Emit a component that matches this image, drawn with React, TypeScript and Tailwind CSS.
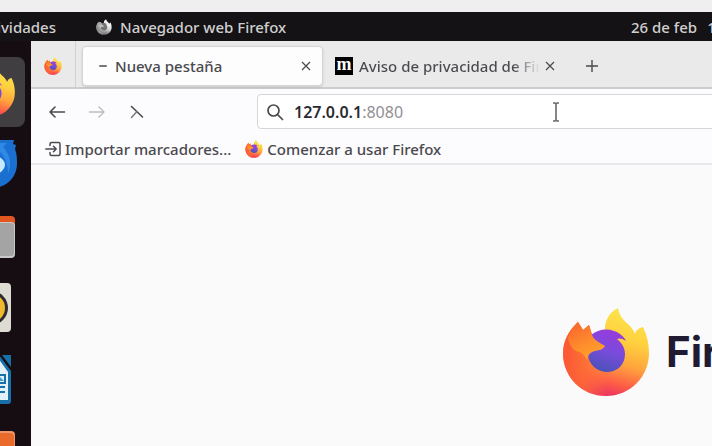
import { useId } from "react";
import type { ReactNode } from "react";

function FirefoxLogo({ className, mono = false }: { className: string; mono?: boolean }) {
  const id = useId();
  return (
    <svg viewBox="0 0 88 90" className={`${className} shrink-0 ${mono ? "grayscale brightness-125" : ""}`} aria-hidden="true">
      <defs>
        <linearGradient id={`${id}b`} x1="0.72" y1="0" x2="0.45" y2="1">
          <stop offset="0" stopColor="#fbe64a" />
          <stop offset="0.35" stopColor="#ffcf3f" />
          <stop offset="0.6" stopColor="#ffa63c" />
          <stop offset="0.82" stopColor="#ff6046" />
          <stop offset="1" stopColor="#ea2c62" />
        </linearGradient>
        <linearGradient id={`${id}f`} x1="0.1" y1="0.5" x2="1" y2="0.6">
          <stop offset="0" stopColor="#fb5a35" />
          <stop offset="0.4" stopColor="#fd6a33" stopOpacity="0.85" />
          <stop offset="1" stopColor="#ff7a3a" stopOpacity="0" />
        </linearGradient>
        <linearGradient id={`${id}s`} x1="0.2" y1="0" x2="0.7" y2="1">
          <stop offset="0" stopColor="#f9672f" />
          <stop offset="0.6" stopColor="#ff8f2c" />
          <stop offset="1" stopColor="#ffa42c" />
        </linearGradient>
        <linearGradient id={`${id}p`} x1="0.7" y1="0" x2="0.4" y2="1">
          <stop offset="0" stopColor="#9a3bdc" />
          <stop offset="0.5" stopColor="#7a4bdc" />
          <stop offset="1" stopColor="#4b52b8" />
        </linearGradient>
      </defs>
      <path
        fill={`url(#${id}b)`}
        d="M43 27C42 15 46 6 56 1c1 7 5 12 10 16 4 4 6 7 7 10 1-4 4-6 8-7 4 8 6 17 6 26 0 24-19 43-43 43S1 70 1 46c0-11 5-22 15-31l5 8 6-5 3 9z"
      />
      <path fill={`url(#${id}f)`} d="M1 46c0-11 5-22 15-31l5 8 6-5 3 9 18 18v44h-4C20 89 1 70 1 46z" />
      <path
        fill={`url(#${id}p)`}
        d="M29 28c6-5 15-7 23-4 6 2 10 6 12 10-4-3-7-3-9-2 5 4 8 9 8 15 0 11-8 18-18 18s-19-8-19-18c0-7 2-13 3-19z"
      />
      <path
        fill={`url(#${id}s)`}
        d="M6 31c2-6 5-11 10-16l5 8 6-5 3 10c2 5 8 8 13 11-2 4-6 4-10 5-5 1-7 4-8 9-3-6-6-8-11-9-4-2-7-7-8-13z"
      />
    </svg>
  );
}

function ThunderbirdIcon() {
  return (
    <svg viewBox="0 0 52 52" className="size-[52px]" aria-hidden="true">
      <path fill="#1a6fd0" d="M26 2h23l-1 4 3 1-1 4c2 5 2 10 2 16-1 14-12 23-25 23S1 40 1 26 12 2 26 2z" />
      <path fill="#2f8ae6" d="M30 5h12l-4 4c7 7 9 17 5 27 0-12-4-20-13-26z" />
      <ellipse cx="29" cy="27" rx="11" ry="9" fill="#c5e8fd" />
    </svg>
  );
}

function FilesIcon() {
  return (
    <svg viewBox="0 0 52 52" className="size-[52px]" aria-hidden="true">
      <rect x="2" y="6" width="48" height="24" rx="4" fill="#e2571f" />
      <rect x="2" y="12" width="48" height="36" rx="4" fill="#c9c8c8" />
      <rect x="3" y="13" width="46" height="33" rx="3" fill="#a5a4a5" />
    </svg>
  );
}

function RhythmboxIcon() {
  return (
    <svg viewBox="0 0 52 52" className="size-[52px]" aria-hidden="true">
      <rect x="6" y="1" width="40" height="49" rx="4" fill="#dedbd3" />
      <circle cx="26" cy="26" r="17" fill="#2d2b2c" />
      <circle cx="26" cy="26" r="14" fill="#f0b82d" />
      <circle cx="26" cy="26" r="5" fill="#2d2b2c" />
    </svg>
  );
}

function WriterIcon() {
  return (
    <svg viewBox="0 0 52 52" className="size-[52px]" aria-hidden="true">
      <path fill="#1770a8" d="M6 1h40v46a3 3 0 0 1-3 3H9a3 3 0 0 1-3-3z" />
      <path fill="#160d12" d="M34 1h3l9 12v4z" />
      <path fill="#e2f1f8" d="M9 4h24l10 14v28H9z" />
      <path stroke="#1770a8" strokeWidth="2" fill="none" d="M12 33h28M12 38h28M30 21h10v8H30z" />
      <path fill="#3c9bd0" d="M32 27l3-4 4 4z" />
    </svg>
  );
}

function SoftwareIcon() {
  return (
    <svg viewBox="0 0 52 52" className="size-[52px]" aria-hidden="true">
      <rect x="2" y="5" width="48" height="46" rx="4" fill="#f0946a" />
      <rect x="2" y="7" width="47" height="44" rx="4" fill="#ea6a2c" />
    </svg>
  );
}

function DockButton({ label, active = false, children }: { label: string; active?: boolean; children: ReactNode }) {
  return (
    <button
      type="button"
      aria-label={label}
      className={`flex h-[70px] w-[68px] shrink-0 items-center justify-center rounded-lg ${active ? "bg-[#413e41]" : ""}`}
    >
      {children}
    </button>
  );
}

function CloseIcon() {
  return (
    <svg viewBox="0 0 10 10" className="size-[10px]" fill="none" stroke="#4a4a4e" strokeWidth="1.2" aria-hidden="true">
      <path d="M1 1l8 8M9 1L1 9" />
    </svg>
  );
}

function TopBar() {
  return (
    <header className="flex h-[29px] shrink-0 items-center overflow-hidden bg-[#141214] whitespace-nowrap text-[#d0cfd0]">
      <button type="button" className="flex w-14 shrink-0 justify-end">Actividades</button>
      <button type="button" className="ml-10 flex items-center gap-2">
        <FirefoxLogo mono className="size-4" />
        Navegador web Firefox
      </button>
      <button type="button" className="ml-auto flex w-[81px] shrink-0 gap-2.5 overflow-hidden">
        <span>26 de feb</span>
        <span>1</span>
      </button>
    </header>
  );
}

function TabStrip() {
  return (
    <div role="tablist" className="flex h-12 shrink-0 items-center border-b-2 border-[#cdcccd] bg-[#ebeaeb]">
      <button type="button" role="tab" aria-label="Firefox" className="flex h-full w-[45px] items-center justify-center border-r border-[#d2d1d2] pt-1">
        <FirefoxLogo className="size-[18px]" />
      </button>
      <div className="mt-1 ml-1.5 flex h-10 w-[241px] shrink-0 items-center rounded border border-[#d4d3d5] bg-[#fdfdfe] pr-1.5 shadow-sm">
        <span className="ml-4 h-[2px] w-2 rounded bg-[#77767a]" />
        <button type="button" role="tab" aria-selected="true" className="ml-2 flex-1 text-left">Nueva pestaña</button>
        <button type="button" aria-label="Cerrar Nueva pestaña" className="flex size-5 items-center justify-center">
          <CloseIcon />
        </button>
      </div>
      <div className="mt-1 ml-3 flex h-10 w-[225px] shrink-0 items-center">
        <span className="flex size-[18px] shrink-0 items-center justify-center bg-black pb-1 font-['Liberation_Serif',serif] text-lg leading-none font-bold text-white" aria-hidden="true">m</span>
        <button type="button" role="tab" aria-selected="false" className="ml-1.5 flex-1 overflow-hidden bg-linear-to-r from-[#4a494d] from-85% to-transparent bg-clip-text text-left whitespace-nowrap text-transparent">
          Aviso de privacidad de Firefox
        </button>
        <button type="button" aria-label="Cerrar Aviso de privacidad" className="flex size-5 shrink-0 items-center justify-center">
          <CloseIcon />
        </button>
      </div>
      <button type="button" aria-label="Nueva pestaña" className="mt-1 ml-5 flex size-6 items-center justify-center">
        <svg viewBox="0 0 14 14" className="size-3.5" fill="none" stroke="#4a4a4e" strokeWidth="1.4" aria-hidden="true">
          <path d="M7 1v12M1 7h12" />
        </svg>
      </button>
    </div>
  );
}

function Toolbar() {
  return (
    <div className="flex h-[45px] shrink-0 items-center">
      <div className="flex w-[226px] shrink-0 gap-4 pl-3.5">
        <button type="button" aria-label="Atrás" className="flex size-6 items-center justify-center">
          <svg viewBox="0 0 18 14" className="h-3.5 w-[18px]" fill="none" stroke="#4b4a4e" strokeWidth="1.6" strokeLinecap="round" strokeLinejoin="round" aria-hidden="true">
            <path d="M16.500 7H2M7 2L2 7l5 5" />
          </svg>
        </button>
        <button type="button" aria-label="Adelante" disabled className="flex size-6 items-center justify-center">
          <svg viewBox="0 0 18 14" className="h-3.5 w-[18px]" fill="none" stroke="#bdbcbf" strokeWidth="1.4" strokeLinecap="round" strokeLinejoin="round" aria-hidden="true">
            <path d="M1.500 7H16M11 2l5 5-5 5" />
          </svg>
        </button>
        <button type="button" aria-label="Detener" className="flex size-6 items-center justify-center">
          <svg viewBox="0 0 14 14" className="size-3.5" fill="none" strokeLinecap="round" aria-hidden="true">
            <path stroke="#4b4a4e" strokeWidth="1.6" d="M1.500 1.500L12.500 12" />
            <path stroke="#77767a" strokeWidth="1.4" d="M7 6.500L1.500 12.500" />
          </svg>
        </button>
      </div>
      <label className="relative -mr-2 flex h-[35px] flex-1 items-center rounded border border-[#d6d5d8] bg-white pl-2 text-base">
        <svg viewBox="0 0 18 18" className="size-[18px]" fill="none" stroke="#4b4a4e" strokeWidth="1.7" strokeLinecap="round" aria-hidden="true">
          <circle cx="7.500" cy="7.500" r="5.500" />
          <path d="M11.500 11.500L16.500 16.500" />
        </svg>
        <input aria-label="Dirección" defaultValue="127.0.0.1" className="ml-2.5 field-sizing-content font-semibold text-[#2b2a30] outline-none" />
        <span className="font-normal text-[#919094]">:8080</span>
        <svg viewBox="0 0 10 20" className="absolute left-[293px] h-5 w-2.5" fill="none" stroke="#6a696b" strokeWidth="1.6" aria-hidden="true">
          <path d="M2 1h2l1 1 1-1h2M5 2v16M2 19h2l1-1 1 1h2" />
        </svg>
      </label>
    </div>
  );
}

function Bookmarks() {
  return (
    <nav className="flex h-[31px] shrink-0 items-center gap-3.5 border-b-2 border-[#e9e8ea] pl-3.5 whitespace-nowrap">
      <button type="button" className="flex items-center gap-1">
        <svg viewBox="0 0 16 16" className="size-4" fill="none" stroke="#4b4a4e" strokeWidth="1.5" strokeLinecap="round" strokeLinejoin="round" aria-hidden="true">
          <path d="M5 4.500V3a1.500 1.500 0 0 1 1.500-1.500h7A1.500 1.500 0 0 1 15 3v10a1.500 1.500 0 0 1-1.500 1.500h-7A1.500 1.500 0 0 1 5 13v-1.500M.800 8H11M8.500 5.200L11.200 8l-2.700 2.800" />
        </svg>
        Importar marcadores...
      </button>
      <a href="#inicio" className="flex items-center gap-1">
        <FirefoxLogo className="size-[18px]" />
        Comenzar a usar Firefox
      </a>
    </nav>
  );
}

export default function App() {
  return (
    <div className="flex h-screen flex-col overflow-hidden bg-[#f0eff0] pt-3 font-['Noto_Sans',sans-serif] text-[15px] leading-5 font-medium text-[#4a494d]">
      <TopBar />
      <div className="flex min-h-0 flex-1">
        <nav aria-label="Aplicaciones" className="flex w-[31px] shrink-0 flex-col items-end gap-0.5 overflow-hidden bg-[#160d12] pt-4 pr-1.5">
          <DockButton label="Firefox" active>
            <FirefoxLogo className="size-[50px]" />
          </DockButton>
          <DockButton label="Thunderbird"><ThunderbirdIcon /></DockButton>
          <DockButton label="Archivos"><FilesIcon /></DockButton>
          <DockButton label="Rhythmbox"><RhythmboxIcon /></DockButton>
          <DockButton label="LibreOffice Writer"><WriterIcon /></DockButton>
          <DockButton label="Software"><SoftwareIcon /></DockButton>
        </nav>
        <div className="flex min-w-0 flex-1 flex-col overflow-hidden bg-[#fcfbfd]">
          <TabStrip />
          <Toolbar />
          <Bookmarks />
          <main className="flex flex-1 items-start overflow-hidden bg-[#fafafb] pt-[142px] pl-[531px]">
            <h1 className="flex items-center gap-4 font-[Inter,sans-serif] text-[42px] leading-none font-bold text-[#201a33]">
              <FirefoxLogo className="h-[90px] w-[88px]" />
              Firefox
            </h1>
          </main>
        </div>
      </div>
    </div>
  );
}
